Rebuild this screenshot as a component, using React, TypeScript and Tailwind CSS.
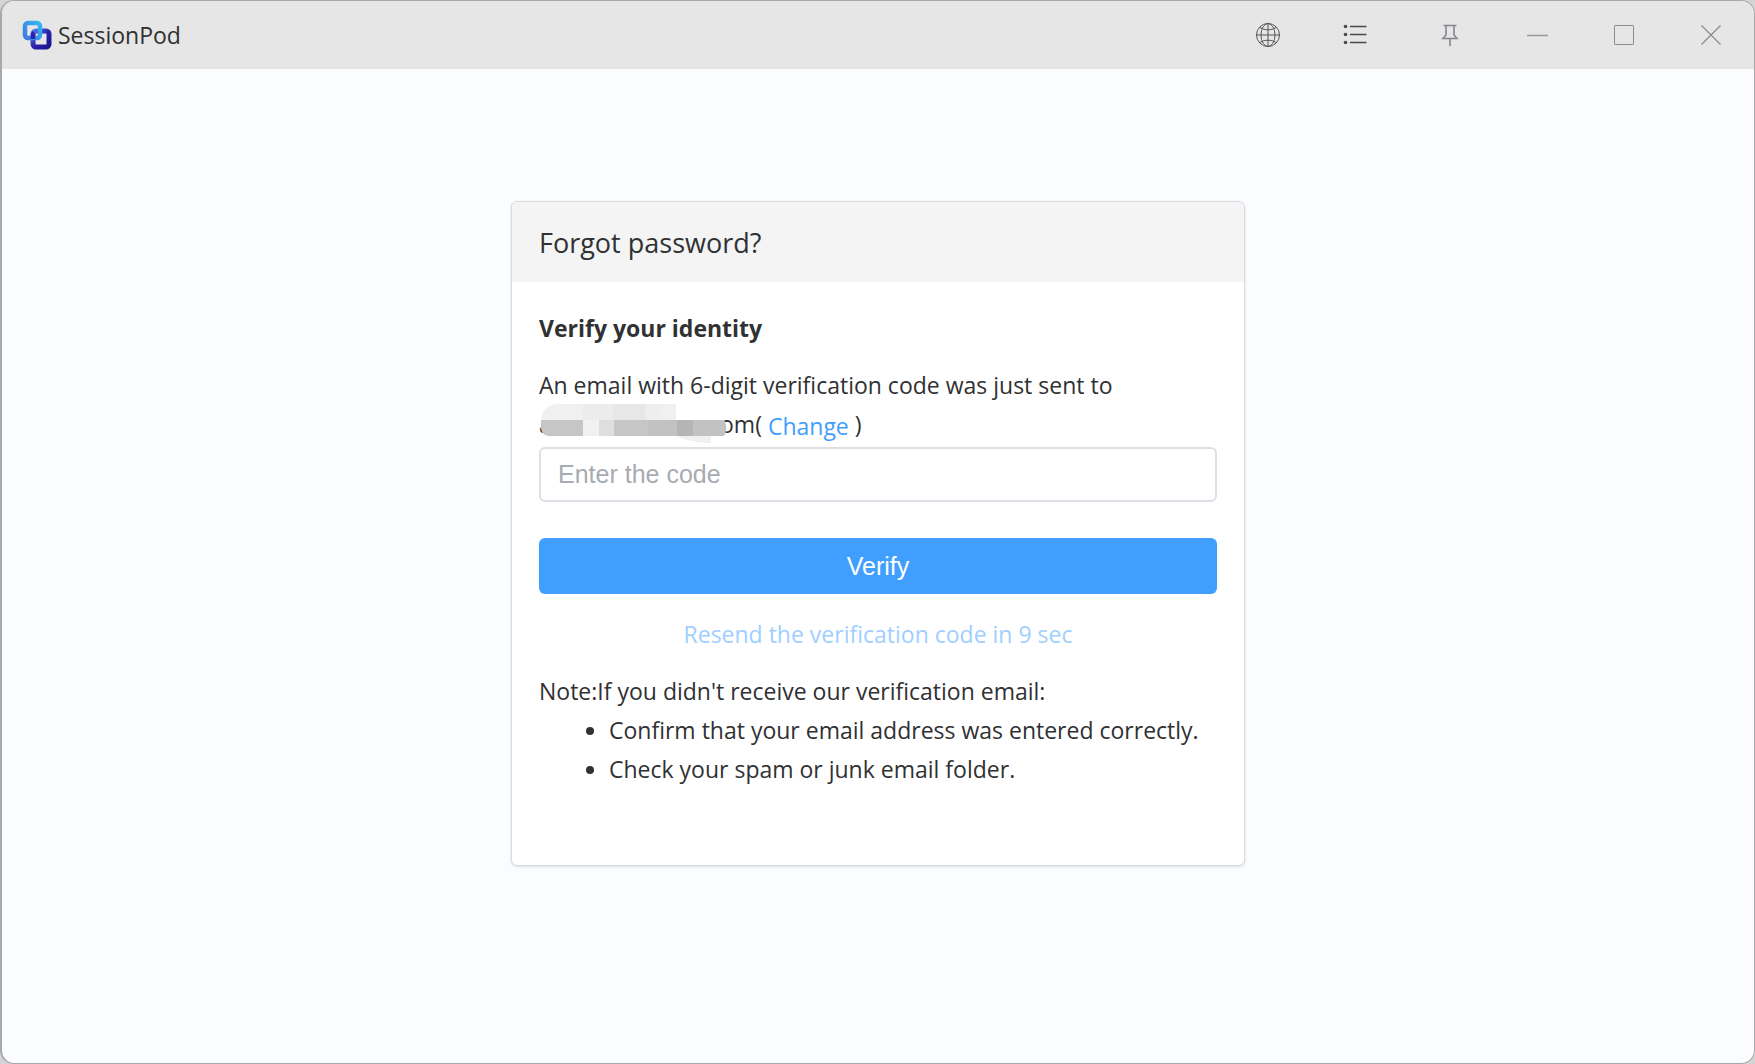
import { FormEvent, ReactNode, useState } from 'react'

function Logo() {
  return (
    <svg width="30" height="30" viewBox="0 0 30 30" fill="none" aria-hidden="true">
      <defs>
        <linearGradient id="front" x1="0" y1="0" x2="1" y2="1">
          <stop offset="0" stopColor="#4a7be0" />
          <stop offset="0.5" stopColor="#2b22b0" />
          <stop offset="1" stopColor="#1c1590" />
        </linearGradient>
        <linearGradient id="back" x1="0" y1="1" x2="1" y2="0">
          <stop offset="0" stopColor="#3f7ade" />
          <stop offset="1" stopColor="#35b6f5" />
        </linearGradient>
      </defs>
      <rect x="11" y="11" width="16" height="16" rx="3" stroke="url(#front)" strokeWidth="5" />
      <rect x="3" y="3" width="15" height="15" rx="3" stroke="url(#back)" strokeWidth="4.5" />
      <path d="M11 19v-4a3.5 3.5 0 0 1 1-2.5" stroke="#2b22b0" strokeWidth="4.5" />
    </svg>
  )
}

function GlobeIcon() {
  return (
    <svg width="24" height="24" viewBox="0 0 24 24" fill="none" stroke="#555" aria-hidden="true">
      <circle cx="12" cy="12" r="11.5" />
      <ellipse cx="12" cy="12" rx="7" ry="11.5" />
      <path d="M12 .5v23M.5 12h23M4 4.5c4 3 12 3 16 0M4 19.5c4-3 12-3 16 0" />
    </svg>
  )
}

function ListIcon() {
  return (
    <svg width="24" height="24" viewBox="0 0 24 24" fill="none" stroke="#4a4a4a" aria-hidden="true">
      <path d="M7.5 3.5H23M7.5 11.5H23M7.5 19.5H23" strokeWidth="1.4" strokeLinecap="round" />
      <g fill="#4a4a4a" stroke="none">
        <circle cx="2.5" cy="3.5" r="1.8" />
        <circle cx="2.5" cy="11.5" r="1.8" />
        <circle cx="2.5" cy="19.5" r="1.8" />
      </g>
    </svg>
  )
}

function PinIcon() {
  return (
    <svg width="24" height="24" viewBox="0 0 24 24" fill="none" stroke="#85858d" strokeWidth="1.6" aria-hidden="true">
      <path d="M5.5 2.5h13M8 2.5v9.5l-3 3.5h14L16 12V2.5M12 15.5V23" />
    </svg>
  )
}

function MinimizeIcon() {
  return (
    <svg width="24" height="24" viewBox="0 0 24 24" stroke="#999" aria-hidden="true">
      <path d="M2 12.5h21" strokeWidth="1.4" />
    </svg>
  )
}

function MaximizeIcon() {
  return (
    <svg width="24" height="24" viewBox="0 0 24 24" fill="none" stroke="#8c8c8c" aria-hidden="true">
      <rect x="2.5" y="2.5" width="19" height="19" rx="0.5" />
    </svg>
  )
}

function CloseIcon() {
  return (
    <svg width="24" height="24" viewBox="0 0 24 24" stroke="#8c8c8c" aria-hidden="true">
      <path d="M2.5 2.5l19 19M21.5 2.5l-19 19" strokeWidth="1.2" />
    </svg>
  )
}

function BarButton({ label, children }: { label: string; children: ReactNode }) {
  return (
    <button
      type="button"
      aria-label={label}
      className="flex h-full w-[87px] items-center justify-center hover:bg-black/5"
    >
      {children}
    </button>
  )
}

// hides the user's address, only the end of it stays readable
function Mosaic() {
  return (
    <svg className="absolute -top-0.5 left-0" width="188" height="40" viewBox="0 0 188 40" aria-hidden="true">
      <path d="M2 17C3 7 9 2 18 1h119v16z" fill="#f0f0f0" />
      <path d="M44 1h30v16H44z" fill="#ececec" />
      <path d="M74 1h32v16H74z" fill="#e7e7e7" />
      <path d="M106 1h16v16h-16z" fill="#eeeeee" />
      <path d="M2 17h42v16H10c-5 0-8-4-8-9z" fill="#c6c6c6" />
      <path d="M44 17h16v16H44z" fill="#f1f1f1" />
      <path d="M60 17h15v16H60z" fill="#dedede" />
      <path d="M75 17h34v16H75z" fill="#c6c6c6" />
      <path d="M109 17h29v16h-29z" fill="#c2c2c2" />
      <path d="M138 17h16v16h-16z" fill="#b5b5b5" />
      <path d="M154 17h31c3 5 3 11 0 16h-31z" fill="#c2c2c2" />
      <path d="M138 33h34v7c-14 0-26-3-34-7z" fill="#f0f0f0" />
    </svg>
  )
}

export default function App() {
  const [code, setCode] = useState('')

  const handleVerify = (event: FormEvent<HTMLFormElement>) => {
    event.preventDefault()
  }

  return (
    <div className="flex min-h-screen bg-[#d4d4d4] font-['Open_Sans','Noto_Sans',sans-serif] text-[#303133]">
      <div className="flex flex-1 flex-col overflow-hidden rounded-[14px] border border-l-2 border-[#a8a8a8] bg-[#fbfcff]">
        <header className="flex h-17 items-center justify-between bg-[#e6e6e6] pl-5">
          <div className="flex items-center gap-1.5">
            <Logo />
            <span className="text-[23px]">SessionPod</span>
          </div>
          <div className="flex h-full">
            <BarButton label="Language">
              <GlobeIcon />
            </BarButton>
            <BarButton label="Menu">
              <ListIcon />
            </BarButton>
            <div className="ml-2 flex">
              <BarButton label="Pin">
                <PinIcon />
              </BarButton>
              <BarButton label="Minimize">
                <MinimizeIcon />
              </BarButton>
              <BarButton label="Maximize">
                <MaximizeIcon />
              </BarButton>
              <BarButton label="Close">
                <CloseIcon />
              </BarButton>
            </div>
          </div>
        </header>

        <main className="flex flex-1 flex-col items-center px-4 pt-33 pb-8">
          <section className="w-full max-w-[734px] overflow-hidden rounded-md border border-[#d8dadd] bg-white shadow-sm">
            <h1 className="bg-[#f4f4f4] px-[27px] pt-[21px] pb-[19px] text-[27px] leading-10">
              Forgot password?
            </h1>
            <form className="px-[27px] pt-[27px] pb-[76px] text-[23px] leading-[39px]" onSubmit={handleVerify}>
              <h2 className="font-bold">Verify your identity</h2>
              <p className="mt-[18px] mb-px">
                An email with 6-digit verification code was just sent to
                <br />
                <span className="relative inline-block">
                  <span className="inline-block w-[181px]">a</span>
                  <Mosaic />
                  om(
                </span>{' '}
                <a href="#change" className="align-[-2px] text-[#409eff]">
                  Change
                </a>{' '}
                )
              </p>
              <input
                type="text"
                aria-label="Verification code"
                placeholder="Enter the code"
                value={code}
                onChange={(e) => setCode(e.target.value)}
                className="block h-[55px] w-full rounded-md border-2 border-[#dcdfe6] px-[17px] font-['Liberation_Sans',Arial,sans-serif] text-[25px] placeholder:text-[#a8abb2]"
              />
              <button
                type="submit"
                className="mt-9 block h-14 w-full rounded-md bg-[#409eff] font-['Liberation_Sans',Arial,sans-serif] text-[25px] text-white"
              >
                Verify
              </button>
              <button type="button" disabled className="mx-auto mt-[21px] block text-[#a0cfff]">
                Resend the verification code in 9 sec
              </button>
              <p className="mt-[18px]">Note:If you didn&apos;t receive our verification email:</p>
              <ul className="list-disc pl-[70px]">
                <li>Confirm that your email address was entered correctly.</li>
                <li>Check your spam or junk email folder.</li>
              </ul>
            </form>
          </section>
        </main>
      </div>
    </div>
  )
}
